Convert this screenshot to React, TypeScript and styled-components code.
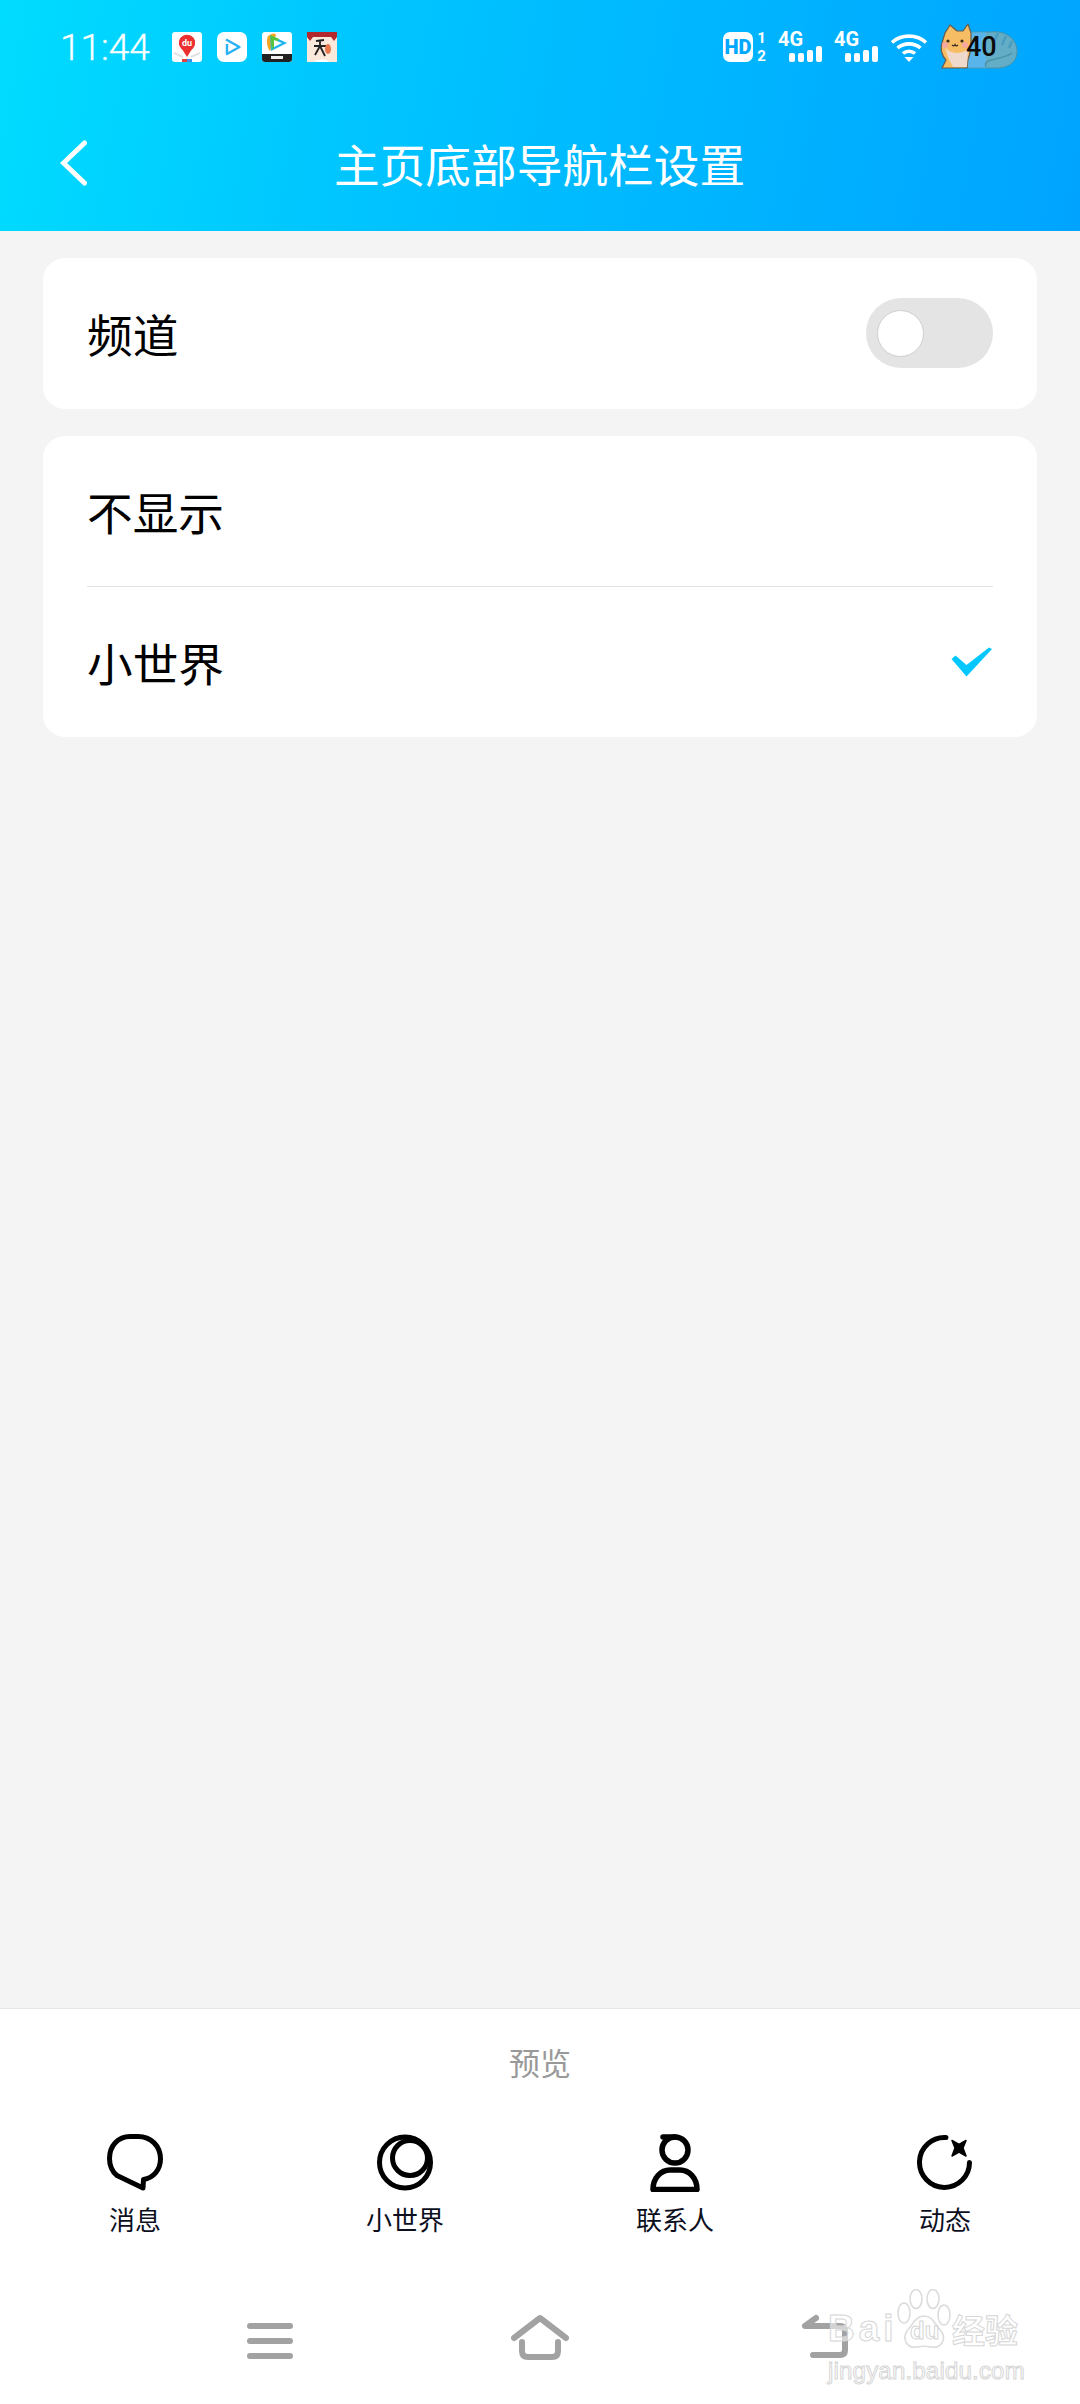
import React from "react";
import styled, { createGlobalStyle } from "styled-components";

const CJK = `"Noto Sans CJK SC", "Noto Sans", sans-serif`;

const GlobalStyle = createGlobalStyle`
  html, body {
    margin: 0;
    padding: 0;
    background: #f4f4f4;
  }
  * {
    box-sizing: border-box;
  }
`;

const tabs = [
  { label: "消息", icon: <ChatIcon /> },
  { label: "小世界", icon: <WorldIcon /> },
  { label: "联系人", icon: <ContactIcon /> },
  { label: "动态", icon: <MomentIcon /> },
];

function ChatIcon() {
  return (
    <svg width="56" height="57" viewBox="0 0 56 57" fill="none" stroke="#000" strokeWidth="5" strokeLinejoin="round">
      <path d="M23 2.5H31C44 2.5 53.5 12 53.5 25C53.5 36 46 44 36.5 45.5L36 54L10 41.5C5 37.5 2.5 32 2.5 24.5C2.5 12 11 2.5 23 2.5Z" />
    </svg>
  );
}

function WorldIcon() {
  return (
    <svg width="56" height="57" viewBox="0 0 56 57" fill="none" stroke="#000" strokeWidth="5">
      <circle cx="28" cy="28.5" r="25.5" />
      <circle cx="33" cy="24" r="17.5" />
    </svg>
  );
}

function ContactIcon() {
  return (
    <svg width="50" height="58" viewBox="0 0 50 58" fill="none" stroke="#000" strokeWidth="5.5" strokeLinejoin="round">
      <path d="M13 3H25" strokeLinecap="round" />
      <circle cx="25" cy="16" r="13" />
      <path d="M3 55.5C3 44 11 36 20 36H30C39 36 47 44 47 55.5Z" />
    </svg>
  );
}

function MomentIcon() {
  return (
    <svg width="56" height="57" viewBox="0 0 56 57" fill="none">
      <path d="M29 3.5A25 25 0 1 0 52.5 28.5" stroke="#000" strokeWidth="5" strokeLinecap="round" />
      <path d="M35 6.5L42 10.5L49 6.5L46 14L49 22L42 18L35 22L38 14Z" fill="#000" stroke="#000" strokeWidth="1.5" strokeLinejoin="round" />
    </svg>
  );
}

function BaiduMapIcon() {
  return (
    <svg width="30" height="30" viewBox="0 0 30 30">
      <rect width="30" height="30" rx="3" fill="#fff" />
      <path d="M2 21L11 25M28 21L19 25" stroke="#e2e2e2" strokeWidth="2" />
      <rect x="10" y="27" width="5" height="3" fill="#e8413b" />
      <rect x="15" y="27" width="5" height="3" fill="#3f8df0" />
      <path d="M15 25L10 17A8 8 0 1 1 20 17Z" fill="#ec2f30" />
      <circle cx="15" cy="11" r="8" fill="#ec2f30" />
      <text x="15" y="14" textAnchor="middle" fontSize="9" fontWeight="700" fontFamily="Roboto, sans-serif" fill="#fff">
        du
      </text>
    </svg>
  );
}

function PlayIcon() {
  return (
    <svg width="30" height="30" viewBox="0 0 30 30">
      <rect width="30" height="30" rx="7" fill="#fff" />
      <path d="M9 7.5L22.5 15L10 22V12" fill="none" stroke="#2ab0f5" strokeWidth="2.4" strokeLinejoin="round" />
    </svg>
  );
}

function TencentVideoIcon() {
  return (
    <svg width="30" height="30" viewBox="0 0 30 30">
      <rect width="30" height="30" rx="3" fill="#fff" />
      <path d="M0 22H30V27A3 3 0 0 1 27 30H3A3 3 0 0 1 0 27Z" fill="#222" />
      <rect x="9" y="24" width="12" height="3" fill="#eee" />
      <path d="M6 4C12 1 12 1 14 3L8 19C5 16 4 8 6 4Z" fill="#f5a623" />
      <path d="M8 3L25 11L9 19Z" fill="#1fb5ee" />
      <path d="M8 3L17 7L10 18Z" fill="#58c33c" />
      <path d="M12 8L20 11L12 15Z" fill="#fff" />
    </svg>
  );
}

function FigureIcon() {
  return (
    <svg width="30" height="30" viewBox="0 0 30 30">
      <rect width="30" height="30" fill="#fbe9db" />
      <rect width="30" height="5" fill="#b3282d" />
      <path d="M0 5L6 5L3 9ZM30 5L24 5L27 9Z" fill="#b3282d" />
      <path d="M9 9L17 8M13 8V14M7 14H19M13 14L8 23M13 14L18 24" stroke="#222" strokeWidth="1.8" fill="none" />
      <ellipse cx="21" cy="17" rx="3" ry="5" fill="#e8774c" />
      <ellipse cx="15" cy="30" rx="7" ry="2.5" fill="#fff" />
    </svg>
  );
}

function WifiIcon() {
  return (
    <svg width="38" height="29" viewBox="0 0 38 29" fill="none" stroke="#fff" strokeWidth="3.6">
      <path d="M2 9.5C11 1 27 1 36 9.5" />
      <path d="M7.5 15C14 9.5 24 9.5 30.5 15" />
      <path d="M13 20.5C16.5 17.5 21.5 17.5 25 20.5" />
      <path d="M14.5 24H23.5L19 29Z" fill="#fff" stroke="none" />
    </svg>
  );
}

function CatBadge() {
  return (
    <svg width="78" height="48" viewBox="0 0 78 48">
      <path d="M28 9H50C68 7 78 18 77 30C76 41 66 46 52 45H28Z" fill="#63adc6" stroke="#4d93a8" strokeWidth="1" />
      <rect x="28" y="9.5" width="18" height="35" fill="#58b4ea" />
      <path d="M58 10L54 19M66 13L62 22M72 18L69 25" stroke="#4a9cc0" strokeWidth="2.5" fill="none" />
      <path d="M46 44C42 34 62 38 72 30" stroke="#4d93a8" strokeWidth="1.5" fill="none" />
      <path d="M5 10L10 2L17 8H23L28 1L31 10V18C31 26 30 32 28 36L27 45H2L6 37C2 33 0 26 2 20Z" fill="#f7bd65" stroke="#6b5a4a" strokeWidth="1.2" strokeLinejoin="round" />
      <path d="M5 24C9 31 21 32 28 26L27 44H13L8 34Z" fill="#efd9cc" />
      <circle cx="5" cy="22" r="3" fill="#f4a8a0" />
      <circle cx="25" cy="22" r="3" fill="#f4a8a0" />
      <circle cx="8" cy="18" r="1.6" fill="#3a2b20" />
      <circle cx="22" cy="18" r="1.6" fill="#3a2b20" />
      <path d="M12 22Q14 24 15 21.5Q16 24 18 22" stroke="#3a2b20" strokeWidth="1.2" fill="none" />
    </svg>
  );
}

function BackChevron() {
  return (
    <svg width="27" height="46" viewBox="0 0 27 46" fill="none" stroke="#fff" strokeWidth="5" strokeLinecap="round" strokeLinejoin="miter">
      <path d="M24.5 3L3.5 23L24.5 43" />
    </svg>
  );
}

function CheckMark() {
  return (
    <svg width="42" height="30" viewBox="0 0 42 30">
      <path d="M0.5 12L4.5 8.5L15.5 18L38 0.5L41 2L15.5 29.5Z" fill="#00c8ff" />
    </svg>
  );
}

function PawMark() {
  return (
    <svg width="54" height="62" viewBox="0 0 54 62" fill="#ffffff88" stroke="#dcdcdc" strokeWidth="1.6">
      <ellipse cx="7" cy="24" rx="6" ry="10" />
      <ellipse cx="19" cy="10" rx="6" ry="9.5" />
      <ellipse cx="36" cy="10" rx="6" ry="9.5" />
      <ellipse cx="47" cy="26" rx="6" ry="10" />
      <path d="M27 27C36 27 38 36 44 42C50 50 44 60 34 58C29 57 25 57 20 58C10 60 5 50 10 42C15 37 18 27 27 27Z" />
    </svg>
  );
}

const Signal = ({ label }: { label: string }) => (
  <SignalBox>
    <SignalText>{label}</SignalText>
    <Bars>
      {[9, 9, 12, 16].map((h, i) => (
        <Bar key={i} $h={h} />
      ))}
    </Bars>
  </SignalBox>
);

const App = () => {
  return (
    <Page>
      <GlobalStyle />
      <Header>
        <StatusBar>
          <StatusLeft>
            <Time>11:44</Time>
            <AppIcons>
              <BaiduMapIcon />
              <PlayIcon />
              <TencentVideoIcon />
              <FigureIcon />
            </AppIcons>
          </StatusLeft>
          <StatusRight>
            <HdGroup>
              <HdBadge>HD</HdBadge>
              <SimNumbers>
                <SimDigit>1</SimDigit>
                <SimDigit>2</SimDigit>
              </SimNumbers>
            </HdGroup>
            <Signal label="4G" />
            <Signal label="4G" />
            <WifiIcon />
            <Battery>
              <CatBadge />
              <BatteryText>40</BatteryText>
            </Battery>
          </StatusRight>
        </StatusBar>
        <TitleRow>
          <BackCell>
            <BackChevron />
          </BackCell>
          <Title>主页底部导航栏设置</Title>
        </TitleRow>
      </Header>

      <Main>
        <Card>
          <Row>
            <RowText>频道</RowText>
            <Toggle>
              <Knob />
            </Toggle>
          </Row>
        </Card>
        <Card>
          <Row>
            <RowText>不显示</RowText>
          </Row>
          <Divider />
          <Row>
            <RowText>小世界</RowText>
            <CheckMark />
          </Row>
        </Card>
      </Main>

      <Footer>
        <Preview>预览</Preview>
        <Tabs>
          {tabs.map((tab) => (
            <Tab key={tab.label}>
              <TabIcon>{tab.icon}</TabIcon>
              <TabLabel>{tab.label}</TabLabel>
            </Tab>
          ))}
        </Tabs>
        <SystemNav>
          <svg width="46" height="50" viewBox="0 0 46 50" fill="none" stroke="#a2a2a2" strokeWidth="6" strokeLinecap="round">
            <path d="M3 12H43M3 27H43M3 42H43" />
          </svg>
          <svg width="58" height="50" viewBox="0 0 58 50" fill="none" stroke="#a2a2a2" strokeWidth="6" strokeLinecap="round" strokeLinejoin="round">
            <path d="M3 24L29 4L55 24" />
            <path d="M11 28V37Q11 43 17 43H41Q47 43 47 37V28" />
          </svg>
          <svg width="76" height="50" viewBox="0 0 76 50" fill="none" stroke="#a2a2a2" strokeWidth="6" strokeLinecap="round" strokeLinejoin="round">
            <path d="M44 4L33 12H68Q73 12 73 17V36Q73 41 68 41H41" />
          </svg>
        </SystemNav>
        <Watermark>
          <LogoLine>
            <BaiText>Bai</BaiText>
            <PawBox>
              <PawMark />
              <DuText>du</DuText>
            </PawBox>
            <JingyanText>经验</JingyanText>
          </LogoLine>
          <UrlText>jingyan.baidu.com</UrlText>
        </Watermark>
      </Footer>
    </Page>
  );
};

export default App;

const Page = styled.div`
  width: 1080px;
  height: 2404px;
  display: flex;
  flex-direction: column;
  overflow: hidden;
  background: #f4f4f4;
  font-family: ${CJK};
`;

const Header = styled.div`
  height: 231px;
  flex-shrink: 0;
  display: flex;
  flex-direction: column;
  background: linear-gradient(100deg, #00dcff 0%, #00c4ff 35%, #00a4ff 100%);
  color: #fff;
`;

const StatusBar = styled.div`
  height: 94px;
  display: flex;
  align-items: center;
  justify-content: space-between;
  padding: 0 62px 0 60px;
`;

const StatusLeft = styled.div`
  display: flex;
  align-items: center;
  gap: 22px;
`;

const Time = styled.div`
  font-family: Roboto, sans-serif;
  font-size: 37px;
  font-weight: 300;
  -webkit-text-stroke: 0.3px #fff;
`;

const AppIcons = styled.div`
  display: flex;
  align-items: center;
  gap: 15px;
`;

const StatusRight = styled.div`
  display: flex;
  align-items: center;
  gap: 12px;
`;

const HdGroup = styled.div`
  display: flex;
  align-items: center;
  gap: 4px;
`;

const HdBadge = styled.div`
  width: 30px;
  height: 30px;
  border-radius: 7px;
  background: #fff;
  color: #00a8ff;
  font-family: Roboto, sans-serif;
  font-size: 20px;
  font-weight: 900;
  display: flex;
  align-items: center;
  justify-content: center;
`;

const SimNumbers = styled.div`
  width: 9px;
  display: flex;
  flex-direction: column;
  align-items: center;
`;

const SimDigit = styled.div`
  font-family: Roboto, sans-serif;
  font-size: 15px;
  font-weight: 700;
  line-height: 18px;
  height: 18px;
`;

const SignalBox = styled.div`
  width: 44px;
  height: 30px;
  position: relative;
`;

const SignalText = styled.div`
  position: absolute;
  left: 0;
  top: -3px;
  font-family: Roboto, sans-serif;
  font-size: 20px;
  font-weight: 700;
  line-height: 20px;
`;

const Bars = styled.div`
  position: absolute;
  right: 0;
  bottom: 0;
  display: flex;
  align-items: flex-end;
  gap: 3px;
`;

const Bar = styled.div<{ $h: number }>`
  width: 6px;
  height: ${(p) => p.$h}px;
  border-radius: 2px;
  background: #fff;
`;

const Battery = styled.div`
  position: relative;
  width: 78px;
  height: 48px;
`;

const BatteryText = styled.div`
  position: absolute;
  left: 26px;
  top: 9px;
  font-family: Roboto, sans-serif;
  font-size: 27px;
  font-weight: 500;
  line-height: 30px;
  color: #0a0a0a;
`;

const TitleRow = styled.div`
  flex: 1;
  display: grid;
  grid-template-columns: 334px 1fr;
  align-items: center;
`;

const BackCell = styled.div`
  padding-left: 60px;
  display: flex;
  align-items: center;
`;

const Title = styled.div`
  font-size: 45.7px;
  line-height: 60px;
  color: #fff;
  white-space: nowrap;
`;

const Main = styled.div`
  flex: 1;
  display: flex;
  flex-direction: column;
  gap: 27px;
  padding: 27px 43px 0;
`;

const Card = styled.div`
  background: #fff;
  border-radius: 22px;
  min-height: 151px;
`;

const Row = styled.div`
  height: 150px;
  display: flex;
  align-items: center;
  justify-content: space-between;
  padding: 0 44px;
`;

const RowText = styled.div`
  font-size: 45.7px;
  color: #000;
`;

const Divider = styled.div`
  height: 1px;
  margin: 0 44px;
  background: #e3e3e3;
`;

const Toggle = styled.div`
  width: 127px;
  height: 70px;
  border-radius: 35px;
  background: #e4e4e4;
  display: flex;
  align-items: center;
  padding-left: 11px;
`;

const Knob = styled.div`
  width: 47px;
  height: 47px;
  border-radius: 50%;
  background: #fff;
  border: 1px solid #cfcfcf;
`;

const Footer = styled.div`
  height: 396px;
  flex-shrink: 0;
  position: relative;
  background: #fff;
  border-top: 1px solid #e6e6e6;
  padding-top: 33px;
`;

const Preview = styled.div`
  height: 40px;
  line-height: 40px;
  text-align: center;
  font-size: 31px;
  color: #999;
`;

const Tabs = styled.div`
  display: grid;
  grid-template-columns: repeat(4, 1fr);
  margin-top: 52px;
`;

const Tab = styled.div`
  display: flex;
  flex-direction: column;
  align-items: center;
  gap: 13px;
`;

const TabIcon = styled.div`
  height: 57px;
  display: flex;
  align-items: center;
  justify-content: center;
`;

const TabLabel = styled.div`
  font-size: 26px;
  line-height: 30px;
  color: #0c0f1e;
`;

const SystemNav = styled.div`
  display: grid;
  grid-template-columns: repeat(3, 270px);
  justify-items: center;
  padding: 0 135px;
  margin-top: 80px;
`;

const Watermark = styled.div`
  position: absolute;
  left: 828px;
  top: 280px;
  width: 196px;
  display: flex;
  flex-direction: column;
  align-items: flex-start;
  pointer-events: none;
`;

const LogoLine = styled.div`
  display: flex;
  align-items: flex-end;
  height: 62px;
`;

const outlined = `
  color: rgba(255, 255, 255, 0.55);
  -webkit-text-stroke: 1px #d6d6d6;
`;

const BaiText = styled.div`
  ${outlined}
  font-family: "Liberation Sans", sans-serif;
  font-size: 37px;
  font-weight: 700;
  line-height: 40px;
  width: 69px;
  letter-spacing: 4px;
  margin-bottom: 2px;
`;

const PawBox = styled.div`
  position: relative;
  width: 54px;
  height: 62px;
`;

const DuText = styled.div`
  ${outlined}
  position: absolute;
  left: 13px;
  bottom: 6px;
  font-family: "Liberation Sans", sans-serif;
  font-size: 24px;
  font-weight: 700;
  line-height: 28px;
`;

const JingyanText = styled.div`
  ${outlined}
  font-size: 33px;
  font-weight: 700;
  line-height: 36px;
  margin-left: 1px;
  margin-bottom: 4px;
`;

const UrlText = styled.div`
  ${outlined}
  font-family: "Liberation Sans", sans-serif;
  font-size: 24px;
  line-height: 28px;
  margin-top: 6px;
  white-space: nowrap;
  letter-spacing: 0.2px;
`;
